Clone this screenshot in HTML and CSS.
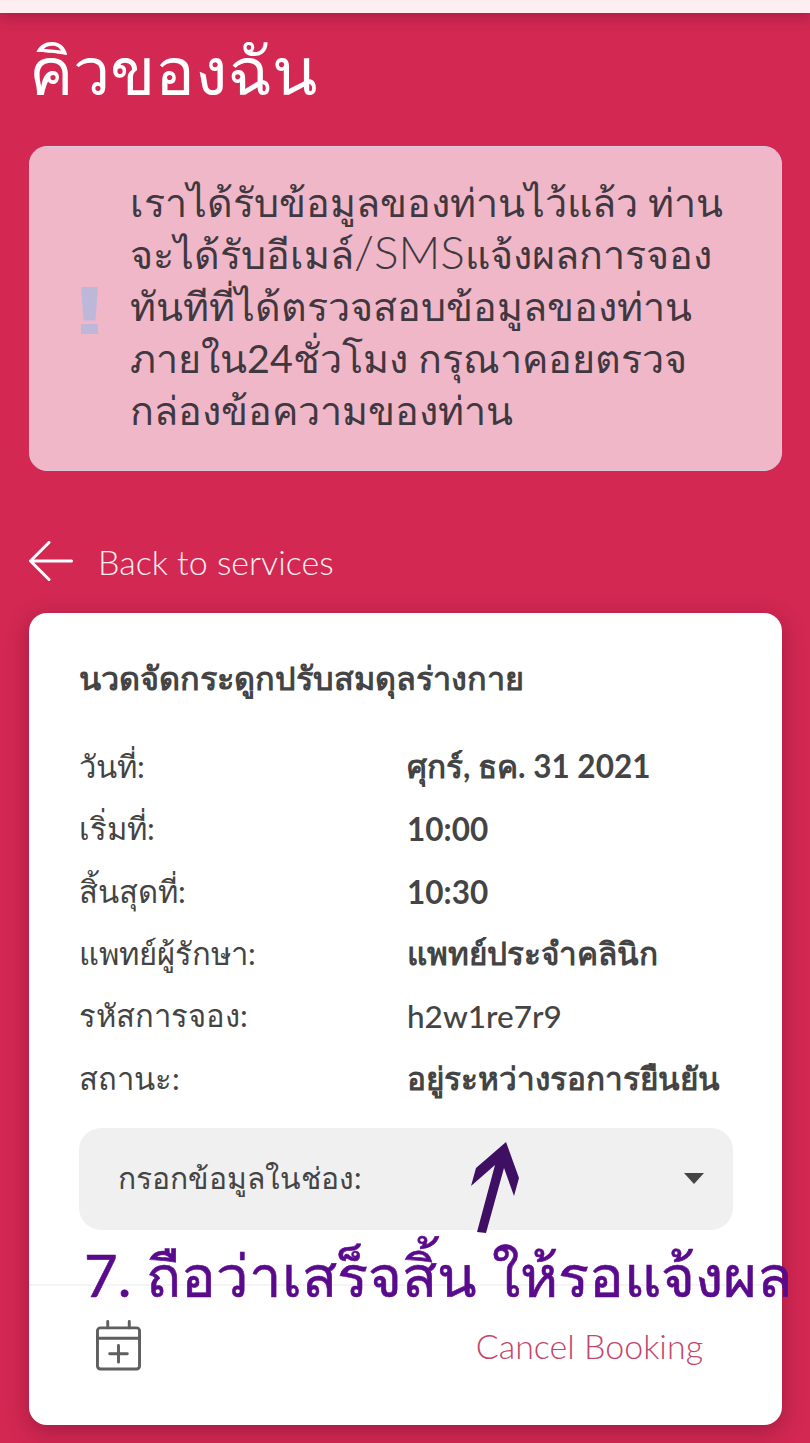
FILE: index.html
```html
<!DOCTYPE html>
<html lang="th">
<head>
    <meta charset="UTF-8">
    <meta name="viewport" content="width=device-width, initial-scale=1.0">
    <title>คิวของฉัน</title>
    <link rel="stylesheet" href="styles.css">
</head>
<body>
    <div class="topbar"></div>
    <main class="page">
        <h1 class="page-title">คิวของฉัน</h1>

        <section class="alert">
            <span class="alert-icon"><i class="alert-bar"></i><i class="alert-dot"></i></span>
            <p class="alert-text">เราได้รับข้อมูลของท่านไว้แล้ว ท่าน<br>จะได้รับอีเมล์<span class="alert-latin">/SMS</span>แจ้งผลการจอง<br>ทันทีที่ได้ตรวจสอบข้อมูลของท่าน<br>ภายใน24ชั่วโมง กรุณาคอยตรวจ<br>กล่องข้อความของท่าน</p>
        </section>

        <a class="back" href="#">
            <svg class="back-icon" viewBox="0 0 44 40" width="44" height="40" fill="none" stroke="#fff" stroke-width="3" stroke-linecap="round" stroke-linejoin="round">
                <path d="M42.500 20H2M20 1.500 1.500 20 20 38.500"/>
            </svg>
            <span>Back to services</span>
        </a>

        <section class="card">
            <div class="card-body">
                <h2 class="card-title">นวดจัดกระดูกปรับสมดุลร่างกาย</h2>
                <dl class="details">
                    <dt>วันที่:</dt><dd>ศุกร์, ธค. 31 2021</dd>
                    <dt>เริ่มที่:</dt><dd>10:00</dd>
                    <dt>สิ้นสุดที่:</dt><dd>10:30</dd>
                    <dt>แพทย์ผู้รักษา:</dt><dd>แพทย์ประจำคลินิก</dd>
                    <dt>รหัสการจอง:</dt><dd class="code">h2w1re7r9</dd>
                    <dt>สถานะ:</dt><dd>อยู่ระหว่างรอการยืนยัน</dd>
                </dl>
                <div class="select">
                    <span>กรอกข้อมูลในช่อง:</span>
                    <i class="select-caret"></i>
                </div>
            </div>
            <div class="card-footer">
                <svg class="calendar" viewBox="0 0 46 52" width="45" height="51" fill="none" stroke="#5f5f5f" stroke-width="3" stroke-linecap="round" stroke-linejoin="round">
                    <rect x="1.500" y="8" width="43" height="42" rx="3"/>
                    <path d="M1.500 18.500h43M12 1.500V8M34 1.500V8M23 26v17M14 34.500h18"/>
                </svg>
                <a class="cancel" href="#">Cancel Booking</a>
            </div>
        </section>
    </main>

    <!-- คำอธิบายที่เขียนทับภาพ -->
    <svg class="note-arrow" viewBox="0 0 48 92" width="48" height="92">
        <path d="M35 0 48 36 43 54 33 26 15 91 6 90 24 23 0 44 5 26Z" fill="#3f0f63"/>
    </svg>
    <p class="note">7. ถือว่าเสร็จสิ้น ให้รอแจ้งผล</p>
</body>
</html>
```

FILE: styles.css
```css
* {
    box-sizing: border-box;
}

body {
    margin: 0;
    position: relative;
    height: 1443px;
    overflow: hidden;
    background-color: #d22852;
    font-family: "Lato", "Noto Sans", "DejaVu Sans", sans-serif;
    color: #444;
}

.topbar {
    height: 13px;
    background-color: #fdeef2;
    box-shadow: 0 4px 14px rgba(90, 10, 40, 0.35);
}

.page {
    padding: 0 28px 0 29px;
}

.page-title {
    margin: 12px 0 0;
    height: 121px;
    font-size: 66.500px;
    line-height: 88px;
    font-weight: 400;
    color: #fff;
}

.alert {
    display: flex;
    align-items: center;
    height: 325px;
    padding: 0 20px 0 51px;
    border: 1px solid #dfc8dc;
    border-radius: 18px;
    background-color: #f0b7c8;
}

.alert-icon {
    display: flex;
    flex-direction: column;
    gap: 3px;
    width: 49px;
    margin-top: 3px;
}

.alert-bar {
    width: 17px;
    height: 34px;
    background-color: #bdb8da;
    clip-path: polygon(0 0, 100% 0, 85% 100%, 15% 100%);
}

.alert-dot {
    width: 17px;
    height: 10px;
    background-color: #bdb8da;
}

.alert-text {
    margin: -6px 0 0;
    font-size: 39.500px;
    line-height: 52px;
    color: #403840;
    white-space: nowrap;
}

.alert-latin {
    font-size: 46px;
    font-weight: 300;
    line-height: 1;
}

.back {
    display: flex;
    align-items: center;
    gap: 25px;
    height: 44px;
    margin-top: 68px;
    font-size: 34px;
    font-weight: 300;
    color: #fbeef2;
    text-decoration: none;
}

.card {
    display: flex;
    flex-direction: column;
    height: 812px;
    margin-top: 30px;
    border-radius: 18px;
    background-color: #fff;
    box-shadow: 0 6px 22px rgba(90, 10, 40, 0.4);
}

.card-body {
    height: 673px;
    padding: 38px 49px 0 50px;
    border-bottom: 2px solid #f4f4f4;
}

.card-title {
    margin: 0 0 31px;
    font-size: 32.400px;
    line-height: 54px;
    font-weight: 700;
}

.details {
    display: grid;
    grid-template-columns: 328px 1fr;
    grid-auto-rows: 62.300px;
    align-items: center;
    margin: 0;
    font-size: 31px;
}

.details dt {
    font-weight: 400;
}

.details dd {
    margin: 0;
    font-size: 31.500px;
    font-weight: 700;
    white-space: nowrap;
}

.details .code {
    font-weight: 500;
}

.select {
    display: flex;
    align-items: center;
    justify-content: space-between;
    height: 102px;
    margin-top: 18px;
    padding: 0 29px 0 39px;
    border-radius: 22px;
    background-color: #f0f0f0;
    font-size: 30px;
}

.select-caret {
    width: 0;
    height: 0;
    border-left: 10px solid transparent;
    border-right: 10px solid transparent;
    border-top: 11px solid #444;
}

.card-footer {
    display: flex;
    align-items: center;
    justify-content: space-between;
    padding: 34px 79px 0 67px;
}

.cancel {
    font-size: 34px;
    font-weight: 300;
    color: #c4446a;
    text-decoration: none;
}

.note-arrow {
    position: absolute;
    left: 471px;
    top: 1142px;
}

.note {
    position: absolute;
    left: 84px;
    top: 1235px;
    margin: 0;
    font-size: 58px;
    line-height: 80px;
    font-weight: 400;
    color: #5a0a8c;
    -webkit-text-stroke: 0.600px #5a0a8c;
    white-space: nowrap;
}
```
